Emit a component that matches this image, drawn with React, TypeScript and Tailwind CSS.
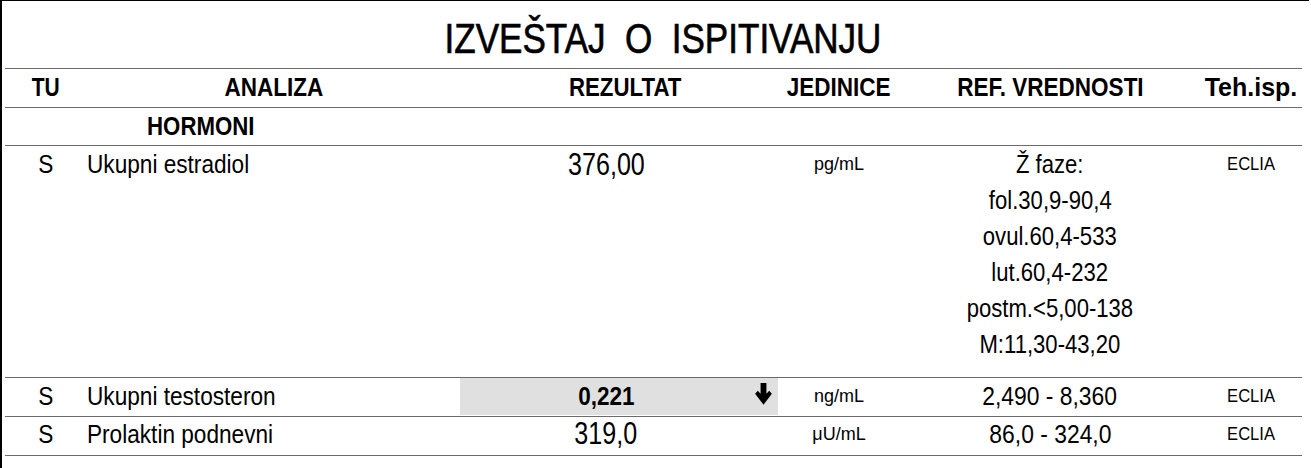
import React from "react";

const font = {
  fontFamily: '"Liberation Sans", Arial, sans-serif',
};

const refLines = [
  "Ž faze:",
  "fol.30,9-90,4",
  "ovul.60,4-533",
  "lut.60,4-232",
  "postm.<5,00-138",
  "M:11,30-43,20",
];

const cols = "grid grid-cols-[82px_373px_318px_122px_300px_102px]";

// Liberation Sans nema uski rez, pa se tekst suzi transformom
function N({ children, className = "scale-x-[0.87]" }: { children: React.ReactNode; className?: string }) {
  return <span className={`inline-block whitespace-pre ${className}`}>{children}</span>;
}

function DownArrow() {
  return (
    <svg width="17" height="22" viewBox="0 0 16 21" className="block">
      <polygon points="5.2,0 10.8,0 10.8,10.2 13.4,7.4 16,10.2 8,20.8 0,10.2 2.6,7.4 5.2,10.2" fill="#000" />
    </svg>
  );
}

export default function App() {
  return (
    <div style={font} className="h-[468px] w-[1309px] border-l-2 border-t border-black bg-white text-black">
      {/* naslov */}
      <div className="flex h-[67px] justify-center pl-[14px] pt-[12px]">
        <div className="text-[43px] leading-[50px] [-webkit-text-stroke:0.7px_#000]">
          <N className="scale-x-[0.815]">IZVEŠTAJ  O  ISPITIVANJU</N>
        </div>
      </div>

      <div className="ml-[3px] w-[1297px]">
        {/* zaglavlje */}
        <div className={`${cols} h-[40px] border-y border-[#6b6b6b] text-[25px] font-bold leading-[37px]`}>
          <div className="text-center">
            <N className="scale-x-[0.84]">TU</N>
          </div>
          <div className="text-center">
            <N className="scale-x-[0.9]">ANALIZA</N>
          </div>
          <div className="pl-[12px] text-center">
            <N className="scale-x-[0.89]">REZULTAT</N>
          </div>
          <div className="text-center">
            <N className="scale-x-[0.9]">JEDINICE</N>
          </div>
          <div className="text-center">
            <N className="scale-x-[0.9]">REF. VREDNOSTI</N>
          </div>
          <div className="text-center">
            <N className="scale-x-[1]">Teh.isp.</N>
          </div>
        </div>

        <div className={`${cols} h-[38px] border-b border-[#6b6b6b] text-[25px] font-bold leading-[36px]`}>
          <div />
          <div className="pl-[60px]">
            <N className="origin-left scale-x-[0.89]">HORMONI</N>
          </div>
        </div>

        {/* estradiol */}
        <div className={`${cols} h-[232px] items-start border-b border-[#6b6b6b] text-[26px] leading-[36px]`}>
          <div className="text-center">
            <N>S</N>
          </div>
          <div>
            <N className="origin-left scale-x-[0.87]">Ukupni estradiol</N>
          </div>
          <div className="flex">
            <div className="w-[292px] pt-px text-center text-[31px]">
              <N className="scale-x-[0.81]">376,00</N>
            </div>
          </div>
          <div className="text-center text-[18px]">pg/mL</div>
          <div className="text-center">
            {refLines.map((l) => (
              <div key={l}>
                <N className="scale-x-[0.85]">{l}</N>
              </div>
            ))}
          </div>
          <div className="text-center text-[18px]">
            <N className="scale-x-[0.92]">ECLIA</N>
          </div>
        </div>

        {/* testosteron */}
        <div className={`${cols} h-[39px] border-b border-[#6b6b6b] text-[26px] leading-[36px]`}>
          <div className="text-center">
            <N>S</N>
          </div>
          <div>
            <N className="origin-left scale-x-[0.87]">Ukupni testosteron</N>
          </div>
          <div className="flex h-[37px] bg-[#e0e0e0]">
            <div className="w-[292px] text-center text-[25px] font-bold">
              <N className="scale-x-[0.9]">0,221</N>
            </div>
            <div className="pl-[3px] pt-[5px]">
              <DownArrow />
            </div>
          </div>
          <div className="text-center text-[18px]">ng/mL</div>
          <div className="text-center">
            <N className="scale-x-[0.88]">2,490 - 8,360</N>
          </div>
          <div className="text-center text-[18px]">
            <N className="scale-x-[0.92]">ECLIA</N>
          </div>
        </div>

        {/* prolaktin */}
        <div className={`${cols} h-[39px] border-b border-[#6b6b6b] text-[26px] leading-[34px]`}>
          <div className="text-center">
            <N>S</N>
          </div>
          <div>
            <N className="origin-left scale-x-[0.87]">Prolaktin podnevni</N>
          </div>
          <div className="flex">
            <div className="w-[292px] text-center text-[31px]">
              <N className="scale-x-[0.81]">319,0</N>
            </div>
          </div>
          <div className="text-center text-[18px]">μU/mL</div>
          <div className="text-center">
            <N className="scale-x-[0.88]">86,0 - 324,0</N>
          </div>
          <div className="text-center text-[18px]">
            <N className="scale-x-[0.92]">ECLIA</N>
          </div>
        </div>
      </div>
    </div>
  );
}
